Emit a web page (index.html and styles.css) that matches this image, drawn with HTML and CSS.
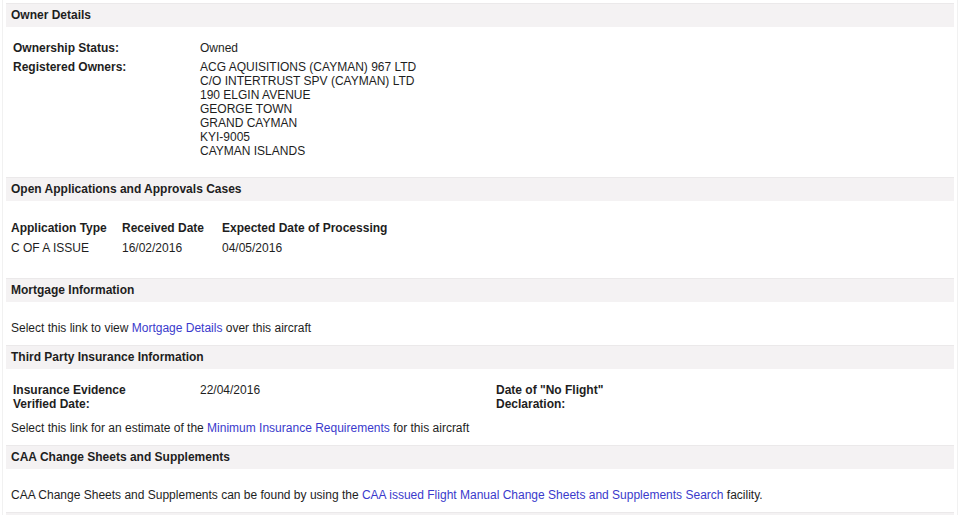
FILE: index.html
```html
<!DOCTYPE html>
<html lang="en">
<head>
  <meta charset="UTF-8" />
  <meta name="viewport" content="width=device-width, initial-scale=1.0"/>
  <title>Aircraft Details</title>
  <link rel="stylesheet" href="styles.css">
</head>
<body>
  <div class="page">
    <h2 class="bar">Owner Details</h2>
    <table class="details">
      <tr>
        <td class="label">Ownership Status:</td>
        <td>Owned</td>
      </tr>
      <tr>
        <td class="label">Registered Owners:</td>
        <td>ACG AQUISITIONS (CAYMAN) 967 LTD<br>C/O INTERTRUST SPV (CAYMAN) LTD<br>190 ELGIN AVENUE<br>GEORGE TOWN<br>GRAND CAYMAN<br>KYI-9005<br>CAYMAN ISLANDS</td>
      </tr>
    </table>

    <h2 class="bar">Open Applications and Approvals Cases</h2>
    <table class="cases">
      <tr>
        <th class="col-type">Application Type</th>
        <th class="col-received">Received Date</th>
        <th>Expected Date of Processing</th>
      </tr>
      <tr>
        <td>C OF A ISSUE</td>
        <td>16/02/2016</td>
        <td>04/05/2016</td>
      </tr>
    </table>

    <h2 class="bar">Mortgage Information</h2>
    <p class="note">Select this link to view <a href="#">Mortgage Details</a> over this aircraft</p>

    <h2 class="bar">Third Party Insurance Information</h2>
    <table class="details">
      <tr>
        <td class="label">Insurance Evidence<br>Verified Date:</td>
        <td class="value-wide">22/04/2016</td>
        <td class="label">Date of "No Flight"<br>Declaration:</td>
        <td></td>
      </tr>
    </table>
    <p class="note note-tight">Select this link for an estimate of the <a href="#">Minimum Insurance Requirements</a> for this aircraft</p>

    <h2 class="bar">CAA Change Sheets and Supplements</h2>
    <p class="note">CAA Change Sheets and Supplements can be found by using the <a href="#">CAA issued Flight Manual Change Sheets and Supplements Search</a> facility.</p>

    <h2 class="bar"></h2>
  </div>
</body>
</html>
```
FILE: styles.css
```css
body {
  margin: 0;
  font-family: "Liberation Sans", Arial, sans-serif;
  font-size: 12px;
  line-height: 14px;
  color: #1e1e1e;
  background: #fff;
}
.page {
  margin-left: 2px;
  width: 948px;
  padding: 3px 3px 0 3px;
  border-left: 1px solid #f1f1f1;
  border-right: 1px solid #f1f1f1;
}
.bar {
  margin: 0;
  height: 23px;
  line-height: 23px;
  padding-left: 5px;
  font-size: 12px;
  font-weight: bold;
  background: #f4f2f3;
  border-top: 1px solid #ebe9ea;
}
a {
  color: #3a3acc;
  text-decoration: none;
}
table {
  border-collapse: collapse;
}
.details {
  margin: 12px 0 0 5px;
}
.details td {
  padding: 2px 2px 3px 2px;
  vertical-align: top;
}
.details .label {
  width: 130px;
  padding-right: 55px;
  font-weight: bold;
}
.details .value-wide {
  width: 292px;
}
.cases {
  margin: 17px 0 20px 2px;
}
.cases th,
.cases td {
  padding: 3px;
  text-align: left;
  vertical-align: top;
}
.cases th {
  font-weight: bold;
}
.cases .col-type {
  width: 105px;
}
.cases .col-received {
  width: 94px;
}
.note {
  margin: 19px 0 10px 5px;
}
.note-tight {
  margin-top: 7px;
  margin-bottom: 10px;
}
.details + .bar {
  margin-top: 16px;
}
```
